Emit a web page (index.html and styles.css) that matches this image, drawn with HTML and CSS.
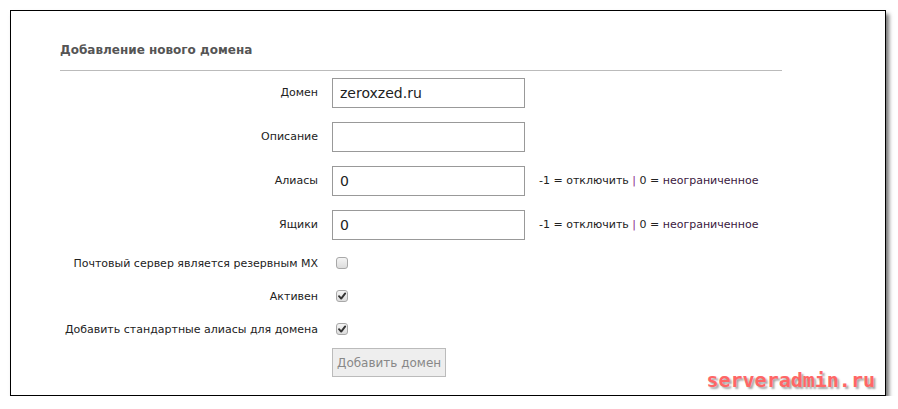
FILE: index.html
```html
<!DOCTYPE html>
<html lang="ru">
<head>
<meta charset="utf-8">
<title>Добавление нового домена</title>
<link rel="stylesheet" href="styles.css">
</head>
<body>
<div class="frame">
  <h2 class="title">Добавление нового домена</h2>
  <form class="form">
    <div class="row">
      <label class="label">Домен</label>
      <div class="field"><input class="text" type="text" value="zeroxzed.ru"></div>
    </div>
    <div class="row">
      <label class="label">Описание</label>
      <div class="field"><input class="text" type="text" value=""></div>
    </div>
    <div class="row">
      <label class="label">Алиасы</label>
      <div class="field"><input class="text" type="text" value="0"><span class="help">-1 = отключить <span class="sep">|</span> 0 = <span class="unl">неограниченное</span></span></div>
    </div>
    <div class="row">
      <label class="label">Ящики</label>
      <div class="field"><input class="text" type="text" value="0"><span class="help">-1 = отключить <span class="sep">|</span> 0 = <span class="unl">неограниченное</span></span></div>
    </div>
    <div class="row check-row">
      <label class="label">Почтовый сервер является резервным MX</label>
      <div class="field"><span class="box"></span></div>
    </div>
    <div class="row check-row">
      <label class="label">Активен</label>
      <div class="field"><span class="box"><svg viewBox="0 0 10 10" width="10" height="10"><path d="M2 5.2 L4.2 7.6 L8.2 2.4" fill="none" stroke="#333" stroke-width="1.9" stroke-linecap="round" stroke-linejoin="round"/></svg></span></div>
    </div>
    <div class="row check-row">
      <label class="label">Добавить стандартные алиасы для домена</label>
      <div class="field"><span class="box"><svg viewBox="0 0 10 10" width="10" height="10"><path d="M2 5.2 L4.2 7.6 L8.2 2.4" fill="none" stroke="#333" stroke-width="1.9" stroke-linecap="round" stroke-linejoin="round"/></svg></span></div>
    </div>
    <div class="row button-row">
      <span class="label"></span>
      <div class="field"><button class="submit" type="button">Добавить домен</button></div>
    </div>
  </form>
  <div class="watermark">serveradmin.ru</div>
</div>
</body>
</html>
```
FILE: styles.css
```css
html, body {
  margin: 0;
  padding: 0;
  background: #fff;
}
body {
  font-family: "DejaVu Sans", Verdana, sans-serif;
  color: #222;
}
.frame {
  position: relative;
  box-sizing: border-box;
  margin: 10px 0 0 10px;
  width: 876px;
  height: 386px;
  border: 1px solid #000;
  box-shadow: 3px 4px 4px rgba(0,0,0,0.55);
  padding: 30px 0 0 49px;
}
.title {
  margin: 0;
  width: 722px;
  font-size: 12px;
  font-weight: bold;
  color: #555;
  line-height: 18px;
  padding-bottom: 11px;
  border-bottom: 1px solid #bbb;
}
.form {
  display: flex;
  flex-direction: column;
  gap: 15px;
  margin-top: 7px;
}
.row {
  display: flex;
  align-items: center;
  height: 29px;
}
.check-row {
  height: 18px;
}
.button-row {
  margin-top: -5px;
}
.label {
  width: 258px;
  text-align: right;
  font-size: 11px;
  color: #222;
  padding-right: 14px;
  box-sizing: content-box;
}
.field {
  display: flex;
  align-items: center;
}
.text {
  box-sizing: border-box;
  width: 193px;
  height: 30px;
  border: 1px solid #999;
  margin: 0;
  padding: 0 7px;
  font-family: "DejaVu Sans", Verdana, sans-serif;
  font-size: 14px;
  color: #222;
  background: #fff;
  outline: none;
}
.help {
  margin-left: 14px;
  font-size: 11px;
  color: #222;
}
.sep { color: #8a2a8a; }
.unl { color: #3a1840; }
.box {
  box-sizing: border-box;
  width: 12px;
  height: 12px;
  margin-left: 4px;
  border: 1px solid #a8a8a8;
  border-radius: 3px;
  background: linear-gradient(#f4f4f4, #dcdcdc);
  display: flex;
  align-items: center;
  justify-content: center;
}
.box svg { display: block; }
.submit {
  box-sizing: border-box;
  height: 29px;
  margin: 0;
  padding: 0 4px;
  white-space: nowrap;
  border: 1px solid #bbb;
  background: #eee;
  color: #888;
  font-family: "DejaVu Sans", Verdana, sans-serif;
  font-size: 12px;
}
.watermark {
  position: absolute;
  right: 10px;
  bottom: 3px;
  font-family: "DejaVu Sans Mono", monospace;
  font-weight: bold;
  font-size: 20px;
  line-height: 24px;
  color: #f66;
  text-shadow: 2px 2px 2px rgba(0,0,0,0.35);
}
```
